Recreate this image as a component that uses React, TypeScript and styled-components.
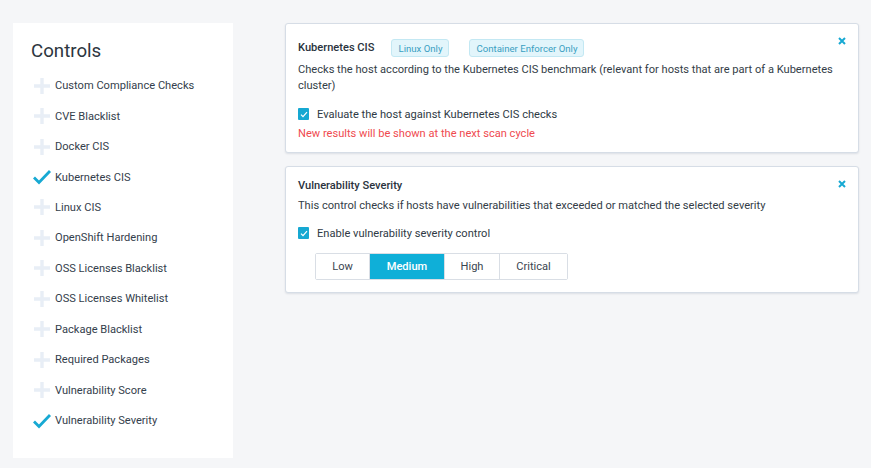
import React from "react";
import styled, { createGlobalStyle } from "styled-components";

const Global = createGlobalStyle`
  html, body { margin: 0; padding: 0; background: #f5f6f8; }
  body { font-family: Roboto, "Noto Sans", sans-serif; color: #2f3a45; }
  * { box-sizing: border-box; }
`;

const Page = styled.div`
  display: flex;
  align-items: flex-start;
  gap: 52px;
  padding: 23px 12px 10px 13px;
  width: 871px;
  height: 468px;
`;

const Sidebar = styled.aside`
  width: 220px;
  height: 435px;
  background: #fff;
  padding: 16px 0 0 17px;
  flex-shrink: 0;
`;

const SideTitle = styled.h2`
  margin: 0 0 7.5px 1px;
  font-size: 18.7px;
  font-weight: 400;
  color: #2d3640;
  line-height: 24px;
`;

const List = styled.ul`
  list-style: none;
  margin: 0;
  padding: 0;
`;

const Item = styled.li`
  display: flex;
  align-items: center;
  height: 30.45px;
  font-size: 11.1px;
  color: #34404c;
`;

const IconBox = styled.span`
  width: 24px;
  height: 20px;
  display: flex;
  align-items: center;
  justify-content: center;
  margin-right: 1px;
`;

const Main = styled.div`
  flex: 1;
  display: flex;
  flex-direction: column;
  gap: 13px;
`;

const Card = styled.section<{ $pad: string }>`
  position: relative;
  background: #fff;
  border: 1px solid #d6dde6;
  border-radius: 3px;
  box-shadow: 0 1px 2px rgba(40, 60, 90, 0.12);
  padding: ${(p) => p.$pad};
`;

const Close = styled.span`
  position: absolute;
  right: 10px;
  top: 13px;
  width: 10px;
  height: 10px;
  display: flex;
`;

const TitleRow = styled.div`
  display: flex;
  align-items: center;
  gap: 20px;
  height: 18px;
`;

const Title = styled.div`
  font-size: 11.1px;
  font-weight: 500;
  color: #2a333d;
  line-height: 16px;
  margin-right: -3px;
`;

const Badge = styled.span`
  display: inline-flex;
  align-items: center;
  height: 18px;
  padding: 0 6px;
  font-size: 9.6px;
  color: #3a9fc2;
  background: #e2f5fb;
  border: 1px solid #c3e8f3;
  border-radius: 3px;
`;

const Desc = styled.p<{ $m: string }>`
  margin: ${(p) => p.$m};
  font-size: 11.1px;
  line-height: 16px;
  color: #333d47;
`;

const CheckRow = styled.label`
  display: flex;
  align-items: center;
  gap: 8px;
  font-size: 11.1px;
  color: #2f3a45;
  height: 16px;
`;

const Box = styled.span`
  width: 11px;
  height: 12px;
  background: #16a8d2;
  border-radius: 1px;
  display: flex;
  align-items: center;
  justify-content: center;
`;

const Warn = styled.div`
  font-size: 11.1px;
  color: #ef4a4f;
  margin-top: 4px;
  line-height: 16px;
`;

const Segment = styled.div`
  display: inline-flex;
  margin: 12px 0 0 17px;
  border: 1px solid #d9dee5;
  border-radius: 2px;
  height: 27px;
`;

const SegBtn = styled.button<{ $active?: boolean; $w: number }>`
  width: ${(p) => p.$w}px;
  height: 100%;
  border: none;
  border-left: 1px solid #d9dee5;
  &:first-child { border-left: none; }
  background: ${(p) => (p.$active ? "#0fafd8" : "#fff")};
  color: ${(p) => (p.$active ? "#fff" : "#3a4550")};
  font-family: Roboto, sans-serif;
  font-size: 11.1px;
  font-weight: ${(p) => (p.$active ? 500 : 400)};
  padding: 0;
`;

const Plus = () => (
  <svg width="18" height="18" viewBox="0 0 18 18">
    <path d="M9 1v16M1 9h16" stroke="#e8eef6" strokeWidth="3.4" />
  </svg>
);

const Tick = () => (
  <svg width="20" height="16" viewBox="0 0 20 16">
    <path d="M2 8.5l5 5L18 2" stroke="#17a9d3" strokeWidth="2.8" fill="none" />
  </svg>
);

const X = () => (
  <svg width="8" height="8" viewBox="0 0 8 8">
    <path d="M1 1l6 6M7 1l-6 6" stroke="#17a9d3" strokeWidth="2" />
  </svg>
);

const MiniCheck = () => (
  <svg width="8" height="7" viewBox="0 0 8 7">
    <path d="M1 3.6l2 2L7 1.2" stroke="#fff" strokeWidth="1.2" fill="none" />
  </svg>
);

const items: [string, boolean][] = [
  ["Custom Compliance Checks", false],
  ["CVE Blacklist", false],
  ["Docker CIS", false],
  ["Kubernetes CIS", true],
  ["Linux CIS", false],
  ["OpenShift Hardening", false],
  ["OSS Licenses Blacklist", false],
  ["OSS Licenses Whitelist", false],
  ["Package Blacklist", false],
  ["Required Packages", false],
  ["Vulnerability Score", false],
  ["Vulnerability Severity", true],
];

export default function App() {
  return (
    <>
      <Global />
      <Page>
        <Sidebar>
          <SideTitle>Controls</SideTitle>
          <List>
            {items.map(([name, on]) => (
              <Item key={name}>
                <IconBox>{on ? <Tick /> : <Plus />}</IconBox>
                {name}
              </Item>
            ))}
          </List>
        </Sidebar>
        <Main>
          <Card $pad="15px 12px 10px 12px">
            <Close><X /></Close>
            <TitleRow>
              <Title>Kubernetes CIS</Title>
              <Badge>Linux Only</Badge>
              <Badge>Container Enforcer Only</Badge>
            </TitleRow>
            <Desc $m="5px 0 12px 0">
              Checks the host according to the Kubernetes CIS benchmark (relevant for hosts that are part of a Kubernetes cluster)
            </Desc>
            <CheckRow>
              <Box><MiniCheck /></Box>
              Evaluate the host against Kubernetes CIS checks
            </CheckRow>
            <Warn>New results will be shown at the next scan cycle</Warn>
          </Card>
          <Card $pad="11px 12px 12px 12px">
            <Close><X /></Close>
            <Title>Vulnerability Severity</Title>
            <Desc $m="4px 0 11px 0">
              This control checks if hosts have vulnerabilities that exceeded or matched the selected severity
            </Desc>
            <CheckRow>
              <Box><MiniCheck /></Box>
              Enable vulnerability severity control
            </CheckRow>
            <Segment>
              <SegBtn $w={53}>Low</SegBtn>
              <SegBtn $w={75} $active>Medium</SegBtn>
              <SegBtn $w={55}>High</SegBtn>
              <SegBtn $w={68}>Critical</SegBtn>
            </Segment>
          </Card>
        </Main>
      </Page>
    </>
  );
}
